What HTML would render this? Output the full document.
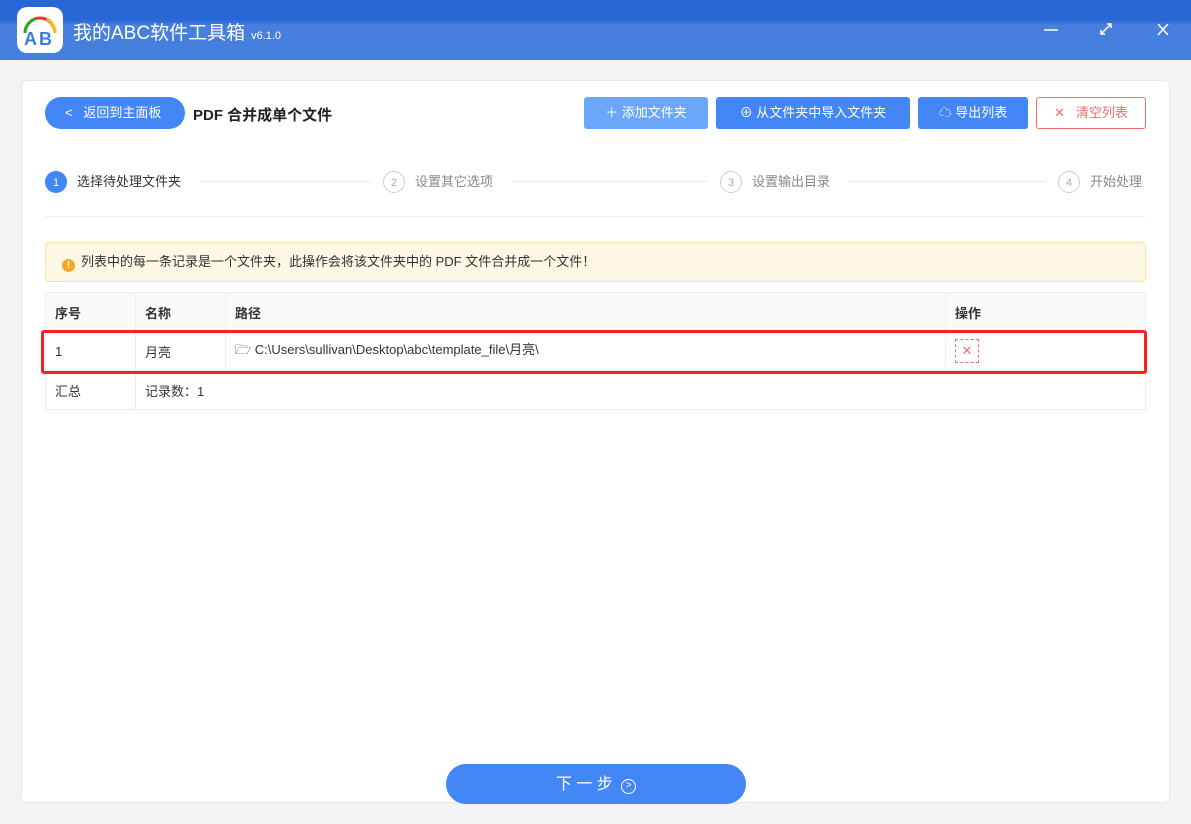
<!DOCTYPE html>
<html><head><meta charset="utf-8"><style>
*{box-sizing:border-box;margin:0;padding:0}
body{width:1191px;height:824px;overflow:hidden;background:#f3f3f3;font-family:"Liberation Sans","Noto Sans CJK SC",sans-serif;font-size:13px;color:#333;position:relative}
.hdr{position:absolute;left:0;top:0;width:1191px;height:60px;background:linear-gradient(180deg,#2966d6 0,#2966d6 20px,#467fdd 25px,#467fdd 100%)}
.logo{position:absolute;left:17px;top:7px;width:46px;height:46px;border-radius:10px;background:#fff}
.title{position:absolute;left:73px;top:18px;color:#fff;font-size:19px}
.title small{font-size:11px;margin-left:6px}
.card{position:absolute;left:21px;top:80px;width:1149px;height:723px;background:#fff;border:1px solid #e8e8e8;border-radius:6px}
.abs{position:absolute}
.btn{position:absolute;top:97px;height:32px;border-radius:3px;color:#fff;font-size:13px;line-height:32px;text-align:center;background:#4287f5}
.step{position:absolute;top:171px;height:22px;line-height:22px;font-size:13px;color:#888}
.step i{display:inline-block;width:22px;height:22px;border:1px solid #ccc;border-radius:50%;text-align:center;font-style:normal;font-size:11px;color:#aaa;margin-right:10px;vertical-align:top}
.line{position:absolute;top:181px;height:1px;background:#e6e6e6}
td{border-right:1px solid #eee;border-bottom:1px solid #eee;padding-left:9px;height:39px}
</style></head><body>
<div class="hdr"></div>
<div class="logo"><svg width="46" height="46" viewBox="0 0 46 46"><path d="M8 26 A15 15 0 0 1 38 26" fill="none" stroke="#e33" stroke-width="3"/><path d="M8 26 A15 15 0 0 1 18 12" fill="none" stroke="#2a2" stroke-width="3"/><path d="M30 12 A15 15 0 0 1 38 26" fill="none" stroke="#fb2" stroke-width="3"/><text x="7" y="38" font-family="Liberation Sans" font-weight="bold" font-size="18" fill="#3a7de0">A</text><text x="22" y="38" font-family="Liberation Sans" font-weight="bold" font-size="18" fill="#3a7de0">B</text></svg></div>
<div class="title">我的ABC软件工具箱<small>v6.1.0</small></div>
<svg class="abs" style="left:1040px;top:20px" width="130" height="20" viewBox="0 0 130 20"><path d="M4 10H18" stroke="#fff" stroke-width="1.5"/><path d="M61 14L71 4M67 4H71V8M61 10V14H65" stroke="#fff" stroke-width="1.5" fill="none"/><path d="M118 4L128 15M128 4L118 15" stroke="#fff" stroke-width="1.5"/></svg>
<div class="card"></div>
<div class="abs" style="left:45px;top:97px;width:140px;height:32px;border-radius:16px;background:#4287f5;color:#fff;line-height:32px;font-size:13px;padding-left:20px">&lt;&nbsp;&nbsp;&nbsp;返回到主面板</div>
<div class="abs" style="left:193px;top:104px;font-size:15px;font-weight:bold;color:#222">PDF 合并成单个文件</div>
<div class="btn" style="left:584px;width:124px;background:#6aa7fb">＋ 添加文件夹</div>
<div class="btn" style="left:716px;width:194px">⊕ 从文件夹中导入文件夹</div>
<div class="btn" style="left:918px;width:110px">☁ 导出列表</div>
<div class="btn" style="left:1036px;width:110px;background:#fff;border:1px solid #f56c6c;color:#f56c6c;line-height:30px">✕&nbsp;&nbsp; 清空列表</div>
<div class="step" style="left:45px;color:#333"><i style="background:#4287f5;border-color:#4287f5;color:#fff">1</i>选择待处理文件夹</div>
<div class="line" style="left:200px;width:170px"></div>
<div class="step" style="left:383px"><i>2</i>设置其它选项</div>
<div class="line" style="left:512px;width:195px"></div>
<div class="step" style="left:720px"><i>3</i>设置输出目录</div>
<div class="line" style="left:849px;width:196px"></div>
<div class="step" style="left:1058px"><i>4</i>开始处理</div>
<div class="abs" style="left:45px;top:216px;width:1101px;height:1px;background:#eee"></div>
<div class="abs" style="left:45px;top:242px;width:1101px;height:40px;background:#fdf8e4;border:1px solid #f8e3a3;border-radius:4px;line-height:38px;padding-left:16px;font-size:13px"><span style="display:inline-block;width:13px;height:13px;border-radius:50%;background:#f5a623;color:#fff;font-size:10px;line-height:13px;text-align:center;font-weight:bold;vertical-align:-2px;margin-right:6px">!</span>列表中的每一条记录是一个文件夹，此操作会将该文件夹中的 PDF 文件合并成一个文件！</div>
<table class="abs" style="left:45px;top:292px;width:1101px;border-collapse:collapse;border-left:1px solid #eee;border-top:1px solid #eee;font-size:13px">
<tr style="background:#f9f9f9;font-weight:bold"><td style="width:90px">序号</td><td style="width:90px">名称</td><td style="width:720px">路径</td><td style="border-right:1px solid #eee">操作</td></tr>
<tr><td>1</td><td>月亮</td><td>🗁 C:\Users\sullivan\Desktop\abc\template_file\月亮\</td><td><span style="display:inline-block;width:24px;height:24px;border:1px dashed #f56c6c;color:#f56c6c;text-align:center;line-height:22px">✕</span></td></tr>
<tr><td>汇总</td><td colspan="3" style="border-right:1px solid #eee">记录数：1</td></tr>
</table>
<div class="abs" style="left:41px;top:330px;width:1106px;height:44px;border:3px solid #f4231f;border-radius:3px"></div>
<div class="abs" style="left:446px;top:764px;width:300px;height:40px;border-radius:20px;background:#4287f5;color:#fff;text-align:center;line-height:42px;font-size:16px">下 一 步 <span style="display:inline-block;width:15px;height:15px;border:1.5px solid #fff;border-radius:50%;font-size:10px;line-height:12px;vertical-align:1px;margin-left:4px">&gt;</span></div>
</body></html>
